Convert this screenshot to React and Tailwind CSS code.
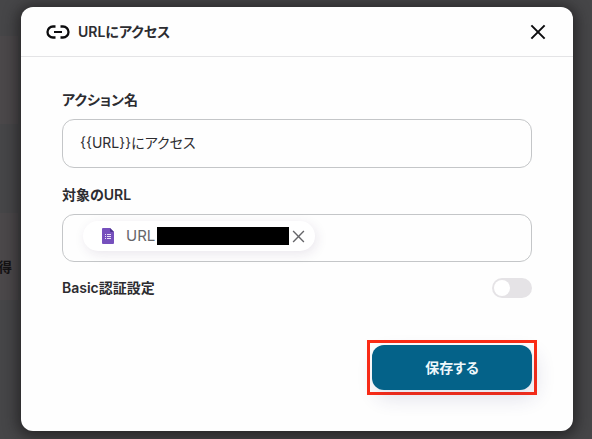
import React, { useState } from "react";

const LinkIcon = () => (
  <svg
    className="h-6 w-6"
    viewBox="0 0 24 24"
    fill="none"
    stroke="#0c0c0e"
    strokeWidth="2.300"
    aria-hidden="true"
  >
    <path d="M9.500 6.500H7a5.500 5.500 0 0 0 0 11h2.500" />
    <path d="M14.500 6.500H17a5.500 5.500 0 0 1 0 11h-2.500" />
    <path d="M8 12h8" strokeWidth="2" />
  </svg>
);

const CloseIcon = ({ className }) => (
  <svg
    className={className}
    viewBox="0 0 14 14"
    fill="none"
    stroke="currentColor"
    aria-hidden="true"
  >
    <path d="M1.200 1.200l11.600 11.600M12.800 1.200L1.200 12.800" />
  </svg>
);

const FormIcon = () => (
  <svg className="h-4 w-3" viewBox="0 0 12 16" aria-hidden="true">
    <path d="M1 0h7l4 4v11a1 1 0 0 1-1 1H1a1 1 0 0 1-1-1V1a1 1 0 0 1 1-1z" fill="#7650bd" />
    <path d="M8 0l4 4H9a1 1 0 0 1-1-1z" fill="#4f3391" />
    <path
      d="M3 6.500h1M5 6.500h4M3 8.500h1M5 8.500h4M3 10.500h1M5 10.500h4"
      stroke="#e9e0f7"
      strokeWidth="1"
    />
  </svg>
);

const App = () => {
  const [name, setName] = useState("{{URL}}にアクセス");
  const [basicAuth, setBasicAuth] = useState(false);

  return (
    <main className="relative min-h-screen overflow-hidden bg-[#464648] pt-[7px] pr-[19px] pb-2 pl-[21px] font-['Inter','Noto_Sans_CJK_JP',sans-serif] text-sm text-[#2c2c30] [font-feature-settings:'palt']">
      <div className="absolute top-9 left-0 h-[88px] w-[18px] bg-[#4b484a]" />
      <div className="absolute top-[213px] left-0 flex h-[87px] w-[18px] items-center justify-end bg-[#4b484a] pt-5 pr-1.5 font-bold text-[#141214]">
        得
      </div>

      <section
        role="dialog"
        aria-labelledby="dialog-title"
        className="relative rounded-xl bg-[#fefefe] shadow-[0_2px_14px_4px_rgba(20,18,20,0.6)]"
      >
        <header className="flex h-[50px] items-center border-b border-[#e4e4e6] pr-[27px] pl-[25px]">
          <LinkIcon />
          <h1 id="dialog-title" className="ml-2 flex-1 font-semibold">
            URLにアクセス
          </h1>
          <button type="button" aria-label="閉じる" className="text-[#0c0c0e]">
            <CloseIcon className="h-4 w-4 stroke-[1.750]" />
          </button>
        </header>

        <form
          className="px-[41px] pt-[31px] pb-9"
          onSubmit={(e) => e.preventDefault()}
        >
          <label htmlFor="action-name" className="block leading-6 font-semibold">
            アクション名
          </label>
          <input
            id="action-name"
            type="text"
            value={name}
            onChange={(e) => setName(e.target.value)}
            className="mt-[7px] block h-[49px] w-full rounded-xl border border-[#c4c6c8] px-[17px] pb-[3px]"
          />

          <p className="mt-[15px] leading-6 font-semibold">対象のURL</p>
          <div className="mt-[7px] flex h-12 items-center rounded-xl border border-[#c4c6c8] px-5">
            <div className="-mt-1 flex h-[30px] items-center rounded-full bg-white pr-2.5 pl-[19px] shadow-[2px_3px_12px_rgba(60,30,90,0.10)]">
              <FormIcon />
              <span className="ml-3 text-[15px] text-[#66666a]">URL</span>
              <span className="ml-0.5 h-[18px] w-[132px] bg-black" />
              <button
                type="button"
                aria-label="削除"
                className="ml-[3px] text-[#66666a]"
              >
                <CloseIcon className="h-[13px] w-[13px] stroke-[1.500]" />
              </button>
            </div>
          </div>

          <div className="mt-3.5 flex items-center justify-between">
            <label htmlFor="basic-auth" className="leading-6 font-semibold">
              Basic認証設定
            </label>
            <input
              id="basic-auth"
              type="checkbox"
              role="switch"
              checked={basicAuth}
              onChange={(e) => setBasicAuth(e.target.checked)}
              className="h-5 w-10 appearance-none rounded-full bg-[#e5e3e6] p-0.5 before:block before:h-4 before:w-4 before:rounded-full before:bg-white checked:bg-[#046289] checked:before:ml-5"
            />
          </div>

          <div className="-mr-[5px] mt-10 flex justify-end">
            <div className="border-3 border-[#fc2c16] p-0.5">
              <button
                type="submit"
                className="block h-[45px] w-40 rounded-xl bg-[#046289] font-bold text-[#eef8fc] shadow-[4px_8px_20px_rgba(40,40,110,0.14)]"
              >
                保存する
              </button>
            </div>
          </div>
        </form>
      </section>
    </main>
  );
};

export default App;
